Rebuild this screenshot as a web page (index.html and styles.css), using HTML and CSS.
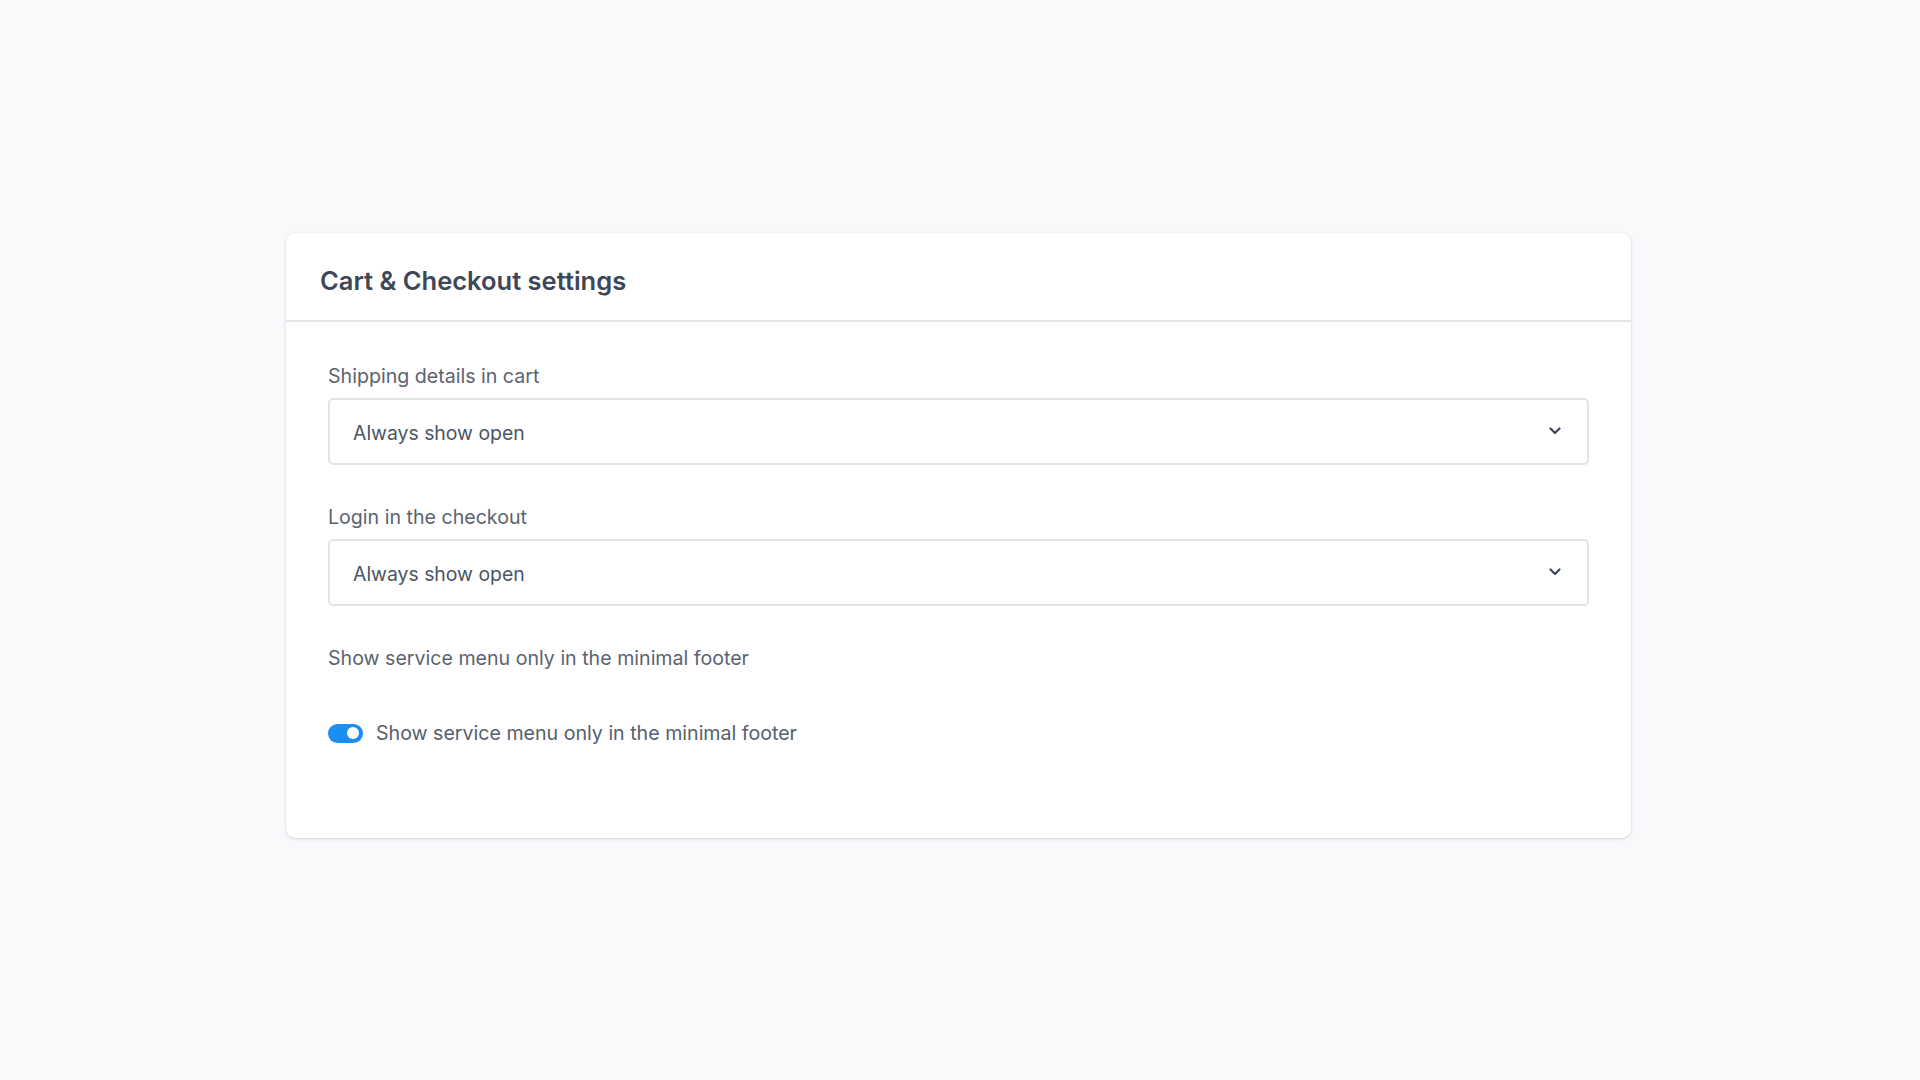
FILE: index.html
```html
<!DOCTYPE html>
<html lang="en">
<head>
<meta charset="utf-8">
<title>Cart &amp; Checkout settings</title>
<link rel="stylesheet" href="styles.css">
</head>
<body>
<main class="page">
  <section class="card">
    <header class="card-header">
      <h1 class="card-title">Cart &amp; Checkout settings</h1>
    </header>
    <div class="card-body">
      <div class="field">
        <label class="field-label">Shipping details in cart</label>
        <div class="select">
          <span class="select-value">Always show open</span>
          <svg class="chevron" width="12" height="8" viewBox="0 0 12 8"><path d="M1.5 1.5 L6 6 L10.5 1.5" fill="none" stroke="#3f4856" stroke-width="2.2" stroke-linecap="round" stroke-linejoin="round"/></svg>
        </div>
      </div>
      <div class="field">
        <label class="field-label">Login in the checkout</label>
        <div class="select">
          <span class="select-value">Always show open</span>
          <svg class="chevron" width="12" height="8" viewBox="0 0 12 8"><path d="M1.5 1.5 L6 6 L10.5 1.5" fill="none" stroke="#3f4856" stroke-width="2.2" stroke-linecap="round" stroke-linejoin="round"/></svg>
        </div>
      </div>
      <div class="field">
        <div class="field-label">Show service menu only in the minimal footer</div>
        <div class="toggle-row">
          <span class="toggle"><span class="knob"></span></span>
          <span class="toggle-text">Show service menu only in the minimal footer</span>
        </div>
      </div>
    </div>
  </section>
</main>
</body>
</html>
```

FILE: styles.css
```css
* { box-sizing: border-box; }
html, body { margin: 0; padding: 0; }
body {
  background: #f8f9fb;
  font-family: Inter, "Noto Sans", "Liberation Sans", sans-serif;
  color: #56606e;
  width: 1920px;
  height: 1080px;
}
.page {
  padding-top: 233px;
  padding-left: 286px;
}
.card {
  width: 1345px;
  height: 605px;
  background: #ffffff;
  border-radius: 9px;
  box-shadow: 0 1px 3px rgba(30, 40, 60, 0.16), 0 0 1px rgba(30, 40, 60, 0.12);
  overflow: hidden;
}
.card-header {
  height: 89px;
  padding: 0 34px;
  border-bottom: 2px solid #e3e6ea;
  display: flex;
  align-items: center;
}
.card-title {
  margin: 0;
  padding-top: 7px;
  font-size: 25.5px;
  font-weight: 600;
  color: #3c4858;
}
.card-body {
  padding: 41px 42px 0 42px;
  display: flex;
  flex-direction: column;
  gap: 39px;
}
.field {
  display: flex;
  flex-direction: column;
}
.field-label {
  font-size: 19.6px;
  line-height: 27px;
  color: #5a6471;
  margin-bottom: 8px;
}
.select {
  height: 67px;
  border: 2px solid #e1e4e8;
  border-radius: 5px;
  display: flex;
  align-items: center;
  justify-content: space-between;
  padding: 0 26px 0 23px;
}
.select-value {
  font-size: 19.4px;
  color: #4c5563;
  padding-top: 3px;
}
.chevron { display: block; margin-top: -2px; }
.toggle-row {
  display: flex;
  align-items: center;
  gap: 13px;
  margin-top: 41px;
}
.toggle {
  width: 35px;
  height: 19px;
  border-radius: 10px;
  background: #1a8ef2;
  display: flex;
  align-items: center;
  justify-content: flex-end;
  padding-right: 4px;
}
.knob {
  width: 12px;
  height: 12px;
  border-radius: 50%;
  background: #ffffff;
}
.toggle-text {
  font-size: 19.6px;
  color: #56606e;
}
```
